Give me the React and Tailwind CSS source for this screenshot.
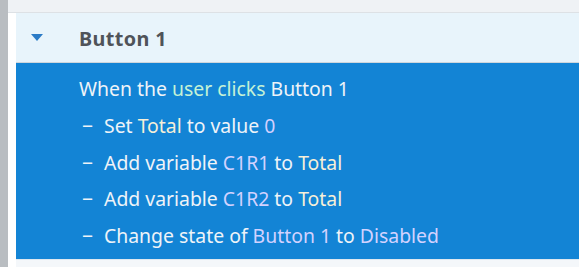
export default function App() {
  const font = { fontFamily: '"Segoe UI", "Noto Sans", "Open Sans", sans-serif' };
  const Dash = () => <span className="inline-block w-[22px] text-left">−</span>;
  return (
    <div className="w-[579px] h-[267px] flex bg-white overflow-hidden" style={font}>
      <div className="w-[8px] h-full bg-[#b9bdc1]" />
      <div className="flex-1 flex flex-col">
        <div className="h-[13px] bg-[#eff2f5] border-b border-[#dde1e5]" />
        <div className="flex flex-1">
          <div className="w-[8px] bg-white" />
          <div className="flex-1 flex flex-col">
            <div className="h-[50px] bg-[#e8f4fb] border-b border-[#cfd6dc] flex items-center">
              <svg width="12" height="7" viewBox="0 0 12 7" className="ml-[15px] mt-[-1px]">
                <polygon points="0,0 12,0 6,7" fill="#2b7bc6" />
              </svg>
              <span className="ml-[36px] mt-[3px] text-[19.8px] font-bold text-[#4f5359] tracking-[0.4px]">Button 1</span>
            </div>
            <div className="h-[196px] bg-[#1384d5] text-[19.4px] text-[#eef3f8] pl-[63px] pt-[8px] leading-[36.8px]">
              <div>When the <span className="text-[#c4f2d6]">user clicks</span> Button 1</div>
              <div className="pl-[3px]"><Dash />Set <span className="text-[#f6efd8]">Total</span> to value <span className="text-[#d2d0ff]">0</span></div>
              <div className="pl-[3px]"><Dash />Add variable <span className="text-[#d2d2ff]">C1R1</span> to <span className="text-[#f6efd8]">Total</span></div>
              <div className="pl-[3px]"><Dash />Add variable <span className="text-[#d2d2ff]">C1R2</span> to <span className="text-[#f6efd8]">Total</span></div>
              <div className="pl-[3px]"><Dash />Change state of <span className="text-[#d2d2ff]">Button 1</span> to <span className="text-[#d2d2ff]">Disabled</span></div>
            </div>
            <div className="flex-1 bg-[#f4f7fa] border-t border-[#dfe8f0]" />
          </div>
        </div>
      </div>
    </div>
  );
}
